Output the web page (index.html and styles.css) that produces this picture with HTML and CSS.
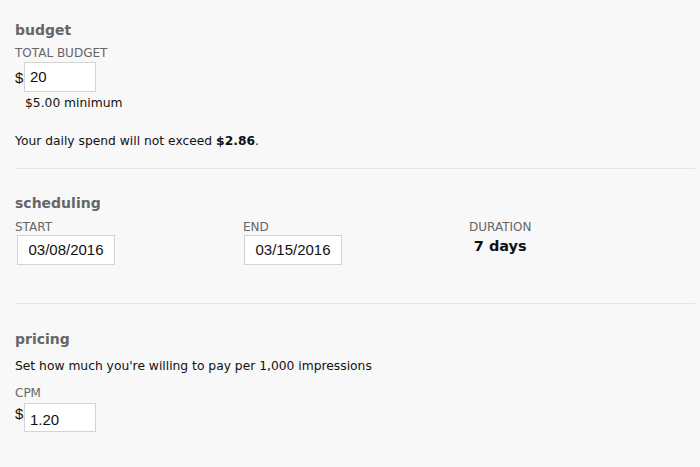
FILE: index.html
```html
<!DOCTYPE html>
<html>
<head>
<meta charset="utf-8">
<link rel="stylesheet" href="styles.css">
</head>
<body>
<div class="page">
  <section class="section budget">
    <h2 class="title">budget</h2>
    <div class="label">TOTAL BUDGET</div>
    <div class="money-row">
      <span class="dollar">$</span>
      <div class="field small">20</div>
    </div>
    <div class="hint">$5.00 minimum</div>
    <p class="note">Your daily spend will not exceed <b>$2.86</b>.</p>
  </section>
  <section class="section scheduling">
    <h2 class="title">scheduling</h2>
    <div class="cols">
      <div class="col">
        <div class="label">START</div>
        <div class="field date">03/08/2016</div>
      </div>
      <div class="col">
        <div class="label">END</div>
        <div class="field date">03/15/2016</div>
      </div>
      <div class="col">
        <div class="duration">
          <div class="label">DURATION</div>
          <div class="days">7 days</div>
        </div>
      </div>
    </div>
  </section>
  <section class="section pricing">
    <h2 class="title">pricing</h2>
    <p class="desc">Set how much you're willing to pay per 1,000 impressions</p>
    <div class="label">CPM</div>
    <div class="money-row raised">
      <span class="dollar">$</span>
      <div class="field small">1.20</div>
    </div>
  </section>
</div>
</body>
</html>
```
FILE: styles.css
```css
html, body {
  margin: 0;
  padding: 0;
  background: #f8f8f8;
}
body {
  font-family: "DejaVu Sans", Verdana, sans-serif;
  color: #111;
  font-size: 12.3px;
}
.page {
  padding: 0 5px 0 15px;
}
.section {
  border-bottom: 1px solid #e4e4e4;
}
.section:last-child {
  border-bottom: none;
}
.budget {
  padding-top: 21px;
  height: 147px;
}
.scheduling {
  padding-top: 25px;
  height: 109px;
}
.pricing {
  padding-top: 26px;
}
.title {
  margin: 0;
  font-size: 14px;
  line-height: 18px;
  font-weight: bold;
  color: #666;
}
.label {
  font-size: 12px;
  line-height: 16px;
  color: #666;
  margin-top: 6px;
}
.money-row {
  display: flex;
  align-items: center;
  margin-top: 1px;
}
.money-row.raised {
  align-items: flex-start;
  margin-top: 2px;
}
.money-row.raised .dollar {
  margin-top: 2px;
}
.dollar {
  font-family: "Liberation Sans", Arial, sans-serif;
  font-size: 15px;
  color: #111;
  width: 9px;
}
.field {
  box-sizing: border-box;
  background: #fff;
  border: 1px solid #d4d4d4;
  font-family: "Liberation Sans", Arial, sans-serif;
  font-size: 15px;
  color: #111;
  height: 30px;
  line-height: 28px;
}
.small {
  width: 72px;
  padding-left: 5px;
}
.raised .small {
  padding-top: 2px;
  height: 29px;
}
.date {
  width: 98px;
  margin-left: 2px;
  margin-top: 0;
  text-align: center;
}
.cols .col:nth-child(2) .date {
  margin-left: 1px;
}
.hint {
  margin-top: 3px;
  margin-left: 10px;
  line-height: 16px;
}
.note {
  margin: 22px 0 0;
  line-height: 16px;
}
.cols {
  display: grid;
  grid-template-columns: 228px 226px 1fr;
  margin-top: 1px;
}
.duration {
  display: inline-flex;
  flex-direction: column;
  align-items: center;
}
.days {
  font-size: 14.5px;
  font-weight: bold;
  line-height: 18px;
  margin-top: 2px;
}
.desc {
  margin: 10px 0 0;
  line-height: 16px;
}
.pricing .label {
  margin-top: 11px;
}
```
